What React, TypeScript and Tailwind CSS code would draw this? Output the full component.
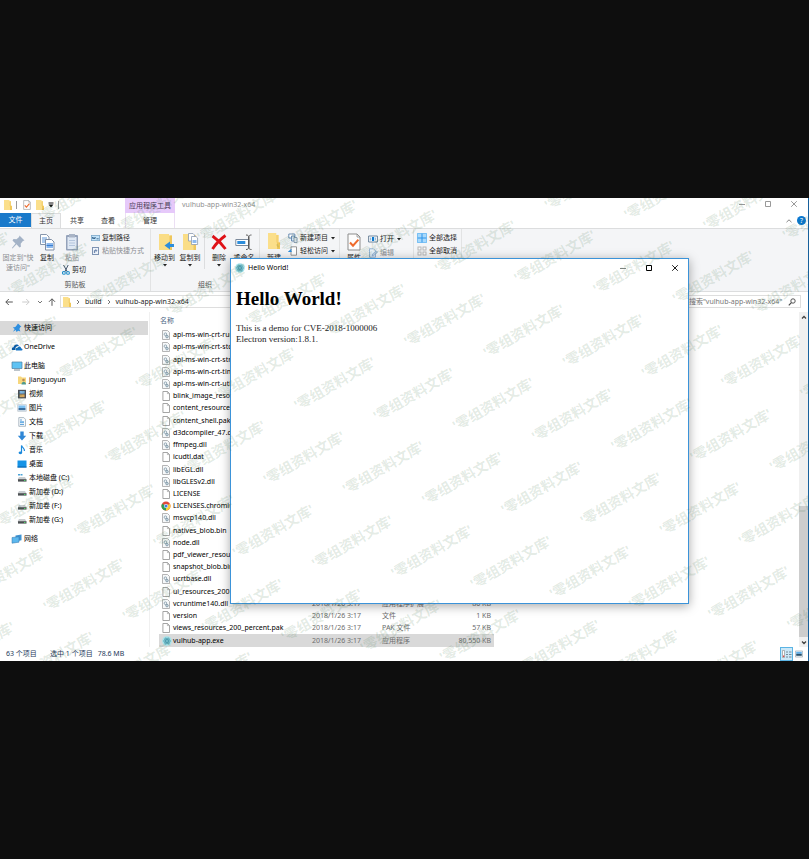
import React from 'react';
import type { ReactNode } from 'react';

/* ---------- icons ---------- */

const Folder = ({ className = 'h-2.5 w-2' }: { className?: string }) => (
  <svg viewBox="0 0 8 10" className={className} preserveAspectRatio="none">
    <path d="M0 0h5.500v1.200h1.500V10H0z" fill="#fbdf8b" />
    <path d="M5.500 1.200H7V6H5.500z" fill="#f5d272" />
    <path d="M6 5.800h2V10H6z" fill="#f0c75a" />
  </svg>
);

const CheckDoc = ({ className }: { className: string }) => (
  <svg viewBox="0 0 14 18" className={className}>
    <path d="M1 1h9l3 3v13H1z" fill="#fdfdfd" stroke="#8d8d8d" strokeWidth="1" />
    <path d="M10 1v3h3" fill="none" stroke="#8d8d8d" strokeWidth=".8" />
    <path d="M3 9.500l3 3.200 5.400-6" fill="none" stroke="#ee6a2c" strokeWidth="2" />
  </svg>
);

const Caret = () => (
  <svg viewBox="0 0 6 4" className="h-1 w-1.5 shrink-0">
    <path d="M1 1h4L3 3.400z" fill="#222" />
  </svg>
);

const PinBig = () => (
  <svg viewBox="0 0 16 18" className="h-[18px] w-4">
    <path d="M9.500 2.500l5 5-1.600.6-2.200 2.600.2 3-1.400.8-3-3.200L2.500 15.500l-.6-.6L5.500 10.500l-3-3 1-1.400 3 .2L9.100 4.100z" fill="#a3b2c6" />
  </svg>
);

const PinSmall = () => (
  <svg viewBox="0 0 10 10" className="h-2.5 w-2.5">
    <path d="M6 .6l3.400 3.200-1.200.5-.8 1.600 1 2.500-2.200-.6L4.500 9 3.800 6.900 1 8.800 2.700 6 .8 4.400l2.500-.3L4.600 2.400z" fill="#2f8fdf" />
  </svg>
);

const Copy = () => (
  <svg viewBox="0 0 16 18" className="h-[18px] w-4">
    <path d="M1.500 1.500h6l2.500 2.500v7.500H1.500z" fill="#fff" stroke="#8897ad" />
    <path d="M3 5h5M3 7h5M3 9h3" stroke="#5a94d8" />
    <path d="M6.500 6.500h6l2.500 2.500v8H6.500z" fill="#fff" stroke="#7f8ea5" />
    <path d="M7.500 10h6.500v5H7.500z" fill="#8db9ee" />
    <path d="M7.500 12.500h6.500" stroke="#3b7fd0" />
  </svg>
);

const Paste = () => (
  <svg viewBox="0 0 14 18" className="h-[18px] w-3.5">
    <rect x="1" y="2" width="12" height="15.500" rx="1" fill="#94a2ba" />
    <rect x="2.500" y="4" width="9" height="12" fill="#dfe8f4" />
    <path d="M4 1h6v3.500H4z" fill="#a9b4c6" />
    <path d="M4 7.500h6M4 10h6M4 12.500h6" stroke="#b4c5dc" />
  </svg>
);

const Scissors = () => (
  <svg viewBox="0 0 8 10" className="h-2.5 w-2">
    <path d="M1.500 0l3.800 6.800M6.200 0L2.800 6.800" stroke="#45586e" strokeWidth="1" fill="none" />
    <circle cx="1.900" cy="7.900" r="1.400" fill="none" stroke="#1d8cc9" strokeWidth="1.100" />
    <circle cx="6" cy="7.900" r="1.400" fill="none" stroke="#1d8cc9" strokeWidth="1.100" />
  </svg>
);

const PathIcon = () => (
  <svg viewBox="0 0 9 8" className="h-2 w-[9px]">
    <rect x=".4" y="1.400" width="8.200" height="5.200" fill="#c4e4fa" stroke="#7ba7c9" strokeWidth=".8" />
    <path d="M1.300 3l.8 2 .8-1.600.8 1.600.7-2M5.500 4.800h2.200" fill="none" stroke="#24547e" strokeWidth=".8" />
  </svg>
);

const ShortcutIcon = () => (
  <svg viewBox="0 0 9 8" className="h-2 w-[9px]">
    <rect x="1.500" y=".5" width="6" height="7" fill="#eef3fa" stroke="#7e93b3" />
    <path d="M3.400 6V3.600h2M4.600 2.300l1.300 1.300-1.300 1.200" fill="none" stroke="#53719e" strokeWidth=".9" />
  </svg>
);

const MoveTo = () => (
  <svg viewBox="0 0 18 18" className="h-[18px] w-[18px]">
    <path d="M3 1h10v1.500h3V17H3z" fill="#fadd86" />
    <path d="M13.500 2.500H16V17h-2.500z" fill="#eec65d" />
    <path d="M18 11v3h-4v2.600L8.500 12.500l5.500-4.100V11z" fill="#2d8ddb" />
  </svg>
);

const CopyTo = () => (
  <svg viewBox="0 0 18 18" className="h-[18px] w-[18px]">
    <path d="M2 1h9v1.500h4V17H2z" fill="#fadd86" />
    <path d="M12.500 2.500H15V17h-2.500z" fill="#eec65d" />
    <path d="M7.500.5h4.500l1.500 1.500v6h-6z" fill="#fff" stroke="#8c9bb0" strokeWidth=".8" />
    <path d="M10.500 3.500h4.500l1.600 1.500v6.500h-6.100z" fill="#fff" stroke="#8c9bb0" strokeWidth=".8" />
    <path d="M11.500 7h4v3h-4z" fill="#8db9ee" />
  </svg>
);

const DeleteX = () => (
  <svg viewBox="0 0 18 18" className="h-[18px] w-[18px]">
    <path d="M2.500 3c5 3.500 9 7.500 13 13M15.500 2.500C10 6.500 6 10.500 2.500 16" fill="none" stroke="#df1218" strokeWidth="2.800" />
  </svg>
);

const Rename = () => (
  <svg viewBox="0 0 18 18" className="h-[18px] w-[18px]">
    <path d="M.8 6.500h13v6H.8z" fill="#fff" stroke="#7c8a9c" />
    <path d="M2.300 8h8v3h-8z" fill="#2d8ddb" />
    <path d="M11 2c1.500 0 2.500.5 2.500 1.500V15c0 1-1 1.500-2.500 1.500M16.500 2c-1.500 0-2.500.5-2.500 1.500V15c0 1 1 1.500 2.500 1.500" fill="none" stroke="#5a5a5a" strokeWidth="1" />
  </svg>
);

const NewItem = () => (
  <svg viewBox="0 0 10 10" className="h-2.5 w-2.5">
    <path d="M.8 1h6v4h-6z" fill="#fff" stroke="#5d83ad" strokeWidth=".9" />
    <path d="M3.500 3h3v5h-3z" fill="#d5e8f8" stroke="#5d83ad" strokeWidth=".9" />
    <path d="M6 4.500h3v5H6z" fill="#e9eef4" stroke="#7f93a9" strokeWidth=".9" />
  </svg>
);

const EasyAccess = () => (
  <svg viewBox="0 0 10 10" className="h-2.5 w-2.5">
    <path d="M3 .8h5.500v8.400H3z" fill="#fff" stroke="#8a8a8a" strokeWidth=".9" />
    <path d="M3.500 3.500L1.200 5.500h2.500" fill="none" stroke="#2d8ddb" strokeWidth="1.200" />
  </svg>
);

const OpenIcon = () => (
  <svg viewBox="0 0 10 8" className="h-2 w-2.5">
    <path d="M.6 1h8.800v6H.6z" fill="#fff" stroke="#5f7891" strokeWidth=".9" />
    <path d="M1.800 2.500h1.500v3H1.800zM7 2.500h1v3H7z" fill="#9dbbd6" />
    <path d="M4 2h2.200v4H4z" fill="#0d7ad0" />
  </svg>
);

const EditIcon = () => (
  <svg viewBox="0 0 10 10" className="h-2.5 w-2.5">
    <path d="M1.500.8h4l2 2v6.400h-6z" fill="#eaf2fa" stroke="#8fb0d2" strokeWidth=".9" />
    <path d="M4 8l.5-2L8.500 3l1 1.200L5.700 7.600z" fill="#b7cfe8" stroke="#7b9cc3" strokeWidth=".6" />
  </svg>
);

const SelectGrid = ({ on }: { on: boolean }) => (
  <svg viewBox="0 0 10 10" className="h-2.5 w-2.5">
    {on && <path d="M0 0h10v10H0z" fill="#a9d9fb" />}
    {on && <path d="M5 0v10M0 5h10" stroke="#2f95ea" strokeWidth="1" />}
    {on && <path d="M.5.5h9v9h-9z" fill="none" stroke="#6dbaf3" strokeWidth=".8" />}
    {!on &&
      [1, 6].map((x) =>
        [1, 6].map((y) => (
          <rect key={`${x}-${y}`} x={x} y={y} width="3" height="3" fill="#fafafa" stroke="#b0b0b0" strokeWidth=".9" />
        )),
      )}
  </svg>
);

const WindowMark = ({ kind, color }: { kind: 'min' | 'max' | 'close'; color: string }) => (
  <svg viewBox="0 0 8 8" className="h-2 w-2" fill="none" stroke={color}>
    {kind === 'min' && <path d="M1 4.500h6" />}
    {kind === 'max' && <path d="M1.500 1.500h5v5h-5z" />}
    {kind === 'close' && <path d="M1.200 1.200l5.600 5.600M6.800 1.200L1.200 6.800" />}
  </svg>
);

const Electron = () => (
  <svg viewBox="0 0 10 10" className="h-2.5 w-2.5 shrink-0">
    <circle cx="5" cy="5" r="4.800" fill="#a5e2ea" />
    <g fill="none" stroke="#3b8da0" strokeWidth=".6">
      <ellipse cx="5" cy="5" rx="3.500" ry="1.400" />
      <ellipse cx="5" cy="5" rx="3.500" ry="1.400" transform="rotate(60 5 5)" />
      <ellipse cx="5" cy="5" rx="3.500" ry="1.400" transform="rotate(120 5 5)" />
    </g>
    <circle cx="5" cy="5" r=".7" fill="#3b8da0" />
  </svg>
);

const fileIcons: Record<string, ReactNode> = {
  dll: (
    <svg viewBox="0 0 8 10" className="h-2.5 w-2">
      <path d="M.5.5h5l2 2v7h-7z" fill="#f6f8f9" stroke="#a3a3a3" strokeWidth=".8" />
      <circle cx="3.400" cy="4.200" r="1.300" fill="none" stroke="#7d96a4" strokeWidth=".8" />
      <circle cx="5" cy="6.600" r="1.300" fill="#c2d2da" stroke="#7d96a4" strokeWidth=".8" />
    </svg>
  ),
  doc: (
    <svg viewBox="0 0 8 10" className="h-2.5 w-2">
      <path d="M.9.5h4.600l2 2v7H.9z" fill="#fff" stroke="#8f8f8f" strokeWidth=".8" />
      <path d="M5.400.5v2.100h2.100" fill="none" stroke="#8f8f8f" strokeWidth=".6" />
    </svg>
  ),
  chrome: (
    <svg viewBox="0 0 10 10" className="h-2.5 w-2.5 -ml-px">
      <circle cx="5" cy="5" r="4.500" fill="#e04a3a" />
      <path d="M5 5L1.100 2.750A4.500 4.500 0 0 0 5 9.500z" fill="#2f9e52" />
      <path d="M5 5v4.500A4.500 4.500 0 0 0 8.900 2.750z" fill="#f7cb3c" />
      <circle cx="5" cy="5" r="2.100" fill="#fff" />
      <circle cx="5" cy="5" r="1.600" fill="#3f80e0" />
    </svg>
  ),
  exe: <Electron />,
};

const Drive = ({ system = false }: { system?: boolean }) => (
  <svg viewBox="0 0 10 10" className="h-2.5 w-2.5">
    {system && <path d="M1 1h2v1.500H1zM3.500 1h2v1.500h-2z" fill="#4aa3d8" />}
    <path d="M2 4h6l1.500 2.500H.5z" fill="#c9cdd0" />
    <path d="M1 6.200h8.500v2.400H1z" fill="#4b4f52" />
    <path d="M7 7h1.500v1H7z" fill="#51d06a" />
  </svg>
);

const navIcons: Record<string, ReactNode> = {
  user: (
    <svg viewBox="0 0 10 10" className="h-2.5 w-2.5">
      <path d="M1 1.500h3l1 1h4v6.500H1z" fill="#f7d77d" />
      <circle cx="6.500" cy="5" r="1.300" fill="#b98a55" />
      <path d="M4.500 9.500c0-3.600 4.500-3.600 4.500 0z" fill="#4f9a8e" />
    </svg>
  ),
  video: (
    <svg viewBox="0 0 10 10" className="h-2.5 w-2.5">
      <path d="M1 .8h8v8.600H1z" fill="#4c4f57" />
      <path d="M2.600 2h5v2.600h-5z" fill="#7fb7e6" />
      <path d="M2.600 5.400h5v2.800h-5z" fill="#d6a65c" />
    </svg>
  ),
  picture: (
    <svg viewBox="0 0 10 10" className="h-2.5 w-2.5">
      <path d="M.7 1.700h8.600v6.600H.7z" fill="#f5f9fc" stroke="#a9b5bf" strokeWidth=".6" />
      <path d="M1.500 2.500h7v2.500h-7z" fill="#7cc0f2" />
      <path d="M1.500 5h7v2.200h-7z" fill="#3a6f9e" />
    </svg>
  ),
  document: (
    <svg viewBox="0 0 10 10" className="h-2.5 w-2.5">
      <path d="M1.800.6h5l1.700 1.700v7H1.800z" fill="#f8fbfd" stroke="#8fa0ae" strokeWidth=".7" />
      <path d="M3 3h2M3 7.500h4" stroke="#3e8ecf" strokeWidth=".8" />
      <path d="M3 4.200h4v2H3z" fill="#6fb1e4" />
    </svg>
  ),
  download: (
    <svg viewBox="0 0 10 10" className="h-2.5 w-2.5">
      <path d="M3.300.5h3.400v4.300h2.500L5 9.500.8 4.800h2.500z" fill="#2f87d6" />
    </svg>
  ),
  music: (
    <svg viewBox="0 0 10 10" className="h-2.5 w-2.5">
      <path d="M4.500.5v7" stroke="#1989dc" strokeWidth="1.200" />
      <ellipse cx="3.400" cy="7.800" rx="1.800" ry="1.400" fill="#1989dc" />
      <path d="M4.600.6c.4 2.200 3.400 2.400 2.800 5.400" fill="none" stroke="#1989dc" strokeWidth="1.200" />
    </svg>
  ),
  desktop: (
    <svg viewBox="0 0 10 10" className="h-2.5 w-2.5">
      <path d="M.5 1.500h9v7h-9z" fill="#1593e6" />
      <path d="M.5 7.500h9v1h-9z" fill="#0a5fa6" />
    </svg>
  ),
  system: <Drive system />,
  drive: <Drive />,
  onedrive: (
    <svg viewBox="0 0 12 10" className="h-2.5 w-3">
      <path d="M1 8C.2 6.200 1.500 5 2.600 5.200 3 2.300 6.600 1.400 8 3.800 5 4 4.200 5.600 4.300 8z" fill="#0a5cae" />
      <path d="M5 8.600C3.800 6.600 5.600 5.400 6.600 5.800c.8-2 3.400-1.500 3.500.4 1.900.1 1.900 2.400.3 2.400z" fill="#1473c4" />
    </svg>
  ),
  pc: (
    <svg viewBox="0 0 12 10" className="h-2.5 w-3">
      <path d="M1 1h10v6.500H1z" fill="#5fc3f4" stroke="#4a7ea0" strokeWidth=".7" />
      <path d="M3 9h6" stroke="#7b8a95" strokeWidth="1" />
    </svg>
  ),
  network: (
    <svg viewBox="0 0 12 10" className="h-2.5 w-3">
      <path d="M4.500 1.500l6-1v5.800L4.500 7.500z" fill="#3f93d2" />
      <path d="M1 3.500l7-.8v5.500L1 9.200z" fill="#5cb8ee" stroke="#3273a8" strokeWidth=".5" />
    </svg>
  ),
  quick: (
    <span className="flex w-3 justify-center">
      <PinSmall />
    </span>
  ),
};

/* ---------- data ---------- */

const navGroups = [
  [{ icon: 'quick', label: '快速访问', root: true }],
  [{ icon: 'onedrive', label: 'OneDrive', root: true }],
  [
    { icon: 'pc', label: '此电脑', root: true },
    { icon: 'user', label: 'jianguoyun' },
    { icon: 'video', label: '视频' },
    { icon: 'picture', label: '图片' },
    { icon: 'document', label: '文档' },
    { icon: 'download', label: '下载' },
    { icon: 'music', label: '音乐' },
    { icon: 'desktop', label: '桌面' },
    { icon: 'system', label: '本地磁盘 (C:)' },
    { icon: 'drive', label: '新加卷 (D:)' },
    { icon: 'drive', label: '新加卷 (F:)' },
    { icon: 'drive', label: '新加卷 (G:)' },
  ],
  [{ icon: 'network', label: '网络', root: true }],
] as { icon: string; label: string; root?: boolean }[][];

const files: string[][] = [
  ['dll', 'api-ms-win-crt-runtime'],
  ['dll', 'api-ms-win-crt-stdio'],
  ['dll', 'api-ms-win-crt-string'],
  ['dll', 'api-ms-win-crt-time'],
  ['dll', 'api-ms-win-crt-utility'],
  ['doc', 'blink_image_resources'],
  ['doc', 'content_resources'],
  ['doc', 'content_shell.pak'],
  ['dll', 'd3dcompiler_47.dll'],
  ['dll', 'ffmpeg.dll'],
  ['doc', 'icudtl.dat'],
  ['dll', 'libEGL.dll'],
  ['dll', 'libGLESv2.dll'],
  ['doc', 'LICENSE'],
  ['chrome', 'LICENSES.chromium'],
  ['dll', 'msvcp140.dll'],
  ['doc', 'natives_blob.bin'],
  ['dll', 'node.dll'],
  ['doc', 'pdf_viewer_resources'],
  ['doc', 'snapshot_blob.bin'],
  ['dll', 'ucrtbase.dll'],
  ['doc', 'ui_resources_200'],
  ['dll', 'vcruntime140.dll', '2018/1/26 3:17', '应用程序扩展', '86 KB'],
  ['doc', 'version', '2018/1/26 3:17', '文件', '1 KB'],
  ['doc', 'views_resources_200_percent.pak', '2018/1/26 3:17', 'PAK 文件', '57 KB'],
  ['exe', 'vulhub-app.exe', '2018/1/26 3:17', '应用程序', '80,550 KB'],
];

/* ---------- ribbon parts ---------- */

const BigButton = ({ icon, label, width, caret, muted }: { icon: ReactNode; label: ReactNode; width: string; caret?: boolean; muted?: boolean }) => (
  <button className={`flex shrink-0 flex-col items-center ${width} ${muted ? 'text-[#8b8e92]' : 'text-[#222]'}`}>
    <span className="flex h-5 items-start justify-center">{icon}</span>
    <span className="whitespace-nowrap leading-[10px]">{label}</span>
    {caret && <Caret />}
  </button>
);

const SmallButton = ({ icon, label, caret, muted }: { icon: ReactNode; label: string; caret?: boolean; muted?: boolean }) => (
  <button className={`flex h-3 items-center gap-0.5 whitespace-nowrap leading-[10px] ${muted ? 'text-[#8b8e92]' : 'text-[#222]'}`}>
    {icon}
    {label}
    {caret && <Caret />}
  </button>
);

const SmallStack = ({ className = '', children }: { className?: string; children: ReactNode }) => (
  <div className={`-mt-px flex flex-col gap-px ${className}`}>{children}</div>
);

const Group = ({ label, width, children }: { label?: string; width: string; children: ReactNode }) => (
  <div className={`flex shrink-0 flex-col justify-between border-r border-[#e2e3e4] pt-1 ${width}`}>
    <div className="flex items-start">{children}</div>
    <div className="h-3 text-center leading-3 text-[#555]">{label}</div>
  </div>
);

const Ribbon = () => (
  <div className="flex h-16 border-y border-[#dcddde] bg-[#f4f5f7]">
    <Group label="剪贴板" width="w-[151px]">
      <BigButton width="w-9" muted icon={<PinBig />} label={<>固定到"快<br />速访问"</>} />
      <BigButton width="w-[22px]" icon={<Copy />} label="复制" />
      <div className="flex w-[33px] flex-col items-start gap-px pl-1">
        <BigButton width="w-5" muted icon={<Paste />} label="粘贴" />
        <SmallButton icon={<Scissors />} label="剪切" />
      </div>
      <SmallStack>
        <SmallButton icon={<PathIcon />} label="复制路径" />
        <SmallButton muted icon={<ShortcutIcon />} label="粘贴快捷方式" />
      </SmallStack>
    </Group>
    <Group label="组织" width="w-[109px]">
      <BigButton width="w-[27px]" caret icon={<MoveTo />} label="移动到" />
      <BigButton width="w-6" caret icon={<CopyTo />} label="复制到" />
      <div className="mx-0.5 h-9 w-px bg-[#dcdddf]" />
      <BigButton width="w-6" caret icon={<DeleteX />} label="删除" />
      <BigButton width="w-[26px]" icon={<Rename />} label="重命名" />
    </Group>
    <Group width="w-20">
      <BigButton width="w-7" icon={<Folder className="h-4 w-3" />} label="新建" />
      <SmallStack>
        <SmallButton caret icon={<NewItem />} label="新建项目" />
        <SmallButton caret icon={<EasyAccess />} label="轻松访问" />
      </SmallStack>
    </Group>
    <Group width="w-[74px]">
      <BigButton width="w-7" icon={<CheckDoc className="h-[18px] w-3.5" />} label="属性" />
      <div className="flex flex-col gap-0.5">
        <SmallButton caret icon={<OpenIcon />} label="打开" />
        <SmallButton muted icon={<EditIcon />} label="编辑" />
      </div>
    </Group>
    <Group width="w-12">
      <SmallStack className="pl-[3px]">
        <SmallButton icon={<SelectGrid on />} label="全部选择" />
        <SmallButton icon={<SelectGrid on={false} />} label="全部取消" />
      </SmallStack>
    </Group>
  </div>
);

/* ---------- explorer ---------- */

const TitleBar = () => (
  <header className="flex h-[15px] items-center bg-white">
    <div className="flex w-[125px] items-center pb-0.5 pl-1">
      <Folder />
      <span className="ml-1 mr-1.5 h-2 w-px bg-[#999]" />
      <CheckDoc className="h-2.5 w-2" />
      <span className="ml-[5px] mr-1">
        <Folder />
      </span>
      <svg viewBox="0 0 6 6" className="h-1.5 w-1.5">
        <path d="M.5 1h5" stroke="#111" />
        <path d="M.5 2.600h5L3 5.400z" fill="#111" />
      </svg>
      <span className="ml-1 h-2 w-px bg-[#999]" />
    </div>
    <div className="h-full w-[50px] bg-[#e6c9fa] text-center leading-[15px] text-[#4c3b58]">应用程序工具</div>
    <h1 className="flex-1 pb-0.5 pl-[7px] text-[#909090]">vulhub-app-win32-x64</h1>
    <div className="flex items-center gap-[18px] pb-[3px] pr-2.5">
      <button aria-label="最小化"><WindowMark kind="min" color="#999" /></button>
      <button aria-label="最大化"><WindowMark kind="max" color="#999" /></button>
      <button aria-label="关闭"><WindowMark kind="close" color="#999" /></button>
    </div>
  </header>
);

const Tabs = () => (
  <nav className="flex h-[15px] items-center bg-white text-[#333]">
    <button className="h-[14px] w-[31px] self-start bg-[#1979ca] leading-[14px] text-white">文件</button>
    <button className="h-full w-[30px] border-x border-t border-[#dcddde] bg-[#f4f5f7]">主页</button>
    <button className="w-8">共享</button>
    <button className="w-[30px]">查看</button>
    <button className="ml-0.5 h-full w-[50px] border-x border-[#ecdff4]">管理</button>
    <span className="flex-1" />
    <svg viewBox="0 0 8 6" className="mr-1 h-1.5 w-2">
      <path d="M1.500 4.200L4 1.800l2.500 2.400" fill="none" stroke="#777" strokeWidth=".9" />
    </svg>
    <button aria-label="帮助" className="mr-0.5 h-[9px] w-[9px] rounded-full bg-[#0b78d0] text-center leading-[9px] text-white">?</button>
  </nav>
);

const Chevron = ({ down = false }: { down?: boolean }) => (
  <svg viewBox="0 0 6 6" className="h-1.5 w-1.5 shrink-0">
    <path d={down ? 'M1 2l2 2 2-2' : 'M2 1l2 2-2 2'} fill="none" stroke="#666" strokeWidth=".9" />
  </svg>
);

const Arrow = ({ className }: { className: string }) => (
  <svg viewBox="0 0 8 8" className={`h-2 w-2 ${className}`} fill="none" stroke="currentColor" strokeWidth="1">
    <path d="M7.800 4H.9M3.800 1L.8 4l3 3" />
  </svg>
);

const AddressBar = () => (
  <div className="flex h-5 items-center bg-white pb-px">
    <div className="flex w-[60px] shrink-0 items-center pl-[5px]">
      <button aria-label="后退"><Arrow className="text-[#555]" /></button>
      <button aria-label="前进" className="ml-[9px]"><Arrow className="rotate-180 text-[#ccc]" /></button>
      <span className="ml-[7px]"><Chevron down /></span>
      <button aria-label="上移" className="ml-[5px]"><Arrow className="rotate-90 text-[#555]" /></button>
    </div>
    <div className="flex h-[13px] flex-1 items-center border border-[#dedede] pl-0.5 text-[#222]">
      <Folder />
      <span className="mx-1"><Chevron /></span>
      <a href="#build">build</a>
      <span className="mx-1"><Chevron /></span>
      <a href="#app">vulhub-app-win32-x64</a>
    </div>
    <label className="ml-1 mr-[7px] flex h-[13px] w-[116px] items-center border border-[#dedede] pl-[3px]">
      <input
        aria-label="搜索"
        placeholder={'搜索"vulhub-app-win32-x64"'}
        className="h-full min-w-0 flex-1 bg-transparent outline-none placeholder:text-[#777]"
      />
      <svg viewBox="0 0 8 8" className="mr-1 h-2 w-2">
        <circle cx="5" cy="3" r="2.200" fill="none" stroke="#444" strokeWidth=".9" />
        <path d="M3.400 4.600L.8 7.400" stroke="#444" strokeWidth="1.100" />
      </svg>
    </label>
  </div>
);

const NavPane = () => (
  <aside className="flex w-[150px] shrink-0 flex-col gap-[5px] border-r border-[#f0f0f0] pt-[9px]">
    {navGroups.map((group, g) => (
      <ul key={g}>
        {group.map((item) => (
          <li
            key={item.label}
            className={`mr-px flex h-3.5 items-center ${item.root ? 'gap-px pl-[11px]' : 'gap-0.5 pl-[17px]'} ${g === 0 ? 'bg-[#d9d9d9]' : ''}`}
          >
            {navIcons[item.icon]}
            <a href={`#${item.icon}`}>{item.label}</a>
          </li>
        ))}
      </ul>
    ))}
  </aside>
);

const FileList = () => (
  <div className="flex-1 pl-[9px]">
    <table className="h-[335px] w-[335px] table-fixed border-collapse text-left">
      <thead>
        <tr className="h-[17px] text-[#4b6584]">
          <th className="w-[153px] p-0 pl-px font-normal">名称</th>
          <th className="w-[70px] p-0" />
          <th className="w-[66px] p-0" />
          <th className="p-0" />
        </tr>
      </thead>
      <tbody>
        {files.map(([icon, name, date, type, size]) => (
          <tr key={name} className={`leading-3 ${icon === 'exe' ? 'bg-[#d9d9d9]' : ''}`}>
            <td className="p-0 pl-[3px]">
              <span className="flex items-center whitespace-nowrap">
                <span className="flex w-[11px]">{fileIcons[icon]}</span>
                {name}
              </span>
            </td>
            <td className="whitespace-nowrap p-0 text-[#6d6d6d]">{date}</td>
            <td className="whitespace-nowrap p-0 text-[#6d6d6d]">{type}</td>
            <td className="whitespace-nowrap p-0 pr-[3px] text-right text-[#6d6d6d]">{size}</td>
          </tr>
        ))}
      </tbody>
    </table>
  </div>
);

const ScrollBar = () => (
  <div className="flex w-[9px] flex-col items-center bg-[#f0f0f0]">
    <svg viewBox="0 0 8 10" className="h-2.5 w-2"><path d="M2 6.500l2-2 2 2" fill="none" stroke="#444" strokeWidth="1.300" /></svg>
    <div className="flex-1" />
    <div className="h-[131px] w-full bg-[#cdcdcd]" />
    <svg viewBox="0 0 8 10" className="h-2.5 w-2"><path d="M2 4.500l2 2 2-2" fill="none" stroke="#444" strokeWidth="1.300" /></svg>
  </div>
);

const StatusBar = () => (
  <footer className="flex h-3.5 items-center bg-white pl-1.5 text-[#1e395b]">
    <span className="w-11">63 个项目</span>
    <span>选中 1 个项目</span>
    <span className="ml-[5px] flex-1">78.6 MB</span>
    <button aria-label="详细信息" className="flex h-full w-[13px] items-center justify-center border border-[#5bb4e4] bg-[#cbe8f8]">
      <svg viewBox="0 0 10 8" className="h-2 w-2.5">
        <path d="M.5.500h2v7h-2z" fill="#fff" stroke="#888" strokeWidth=".6" />
        <path d="M4 2h2M4 4.500h2M4 7h2M7 2h2.500M7 4.500h2.500M7 7h2.500" stroke="#5f7482" strokeWidth=".8" />
        <path d="M1 5.500h1.200v1.500H1z" fill="#d44" />
      </svg>
    </button>
    <button aria-label="缩略图" className="ml-0.5 mr-[5px]">
      <svg viewBox="0 0 8 8" className="h-2 w-2">
        <path d="M.4 1h7.200v6H.4z" fill="#fff" stroke="#9aa7b1" strokeWidth=".7" />
        <path d="M1.200 1.800h5.600v2H1.200z" fill="#5fb1ee" />
        <path d="M1.200 3.800h5.600v2H1.200z" fill="#26506c" />
      </svg>
    </button>
  </footer>
);

/* ---------- demo window ---------- */

const DemoWindow = () => (
  <div className="absolute left-[230px] top-[60px] h-[346px] w-[459px] border border-[#3b93d9] bg-white shadow-[0_2px_10px_rgba(0,0,0,0.35)]">
    <div className="flex h-[17px] items-center pl-1 pr-[9px]">
      <Electron />
      <span className="flex-1 pl-[3px]">Hello World!</span>
      <div className="flex items-center gap-[18px]">
        <button aria-label="最小化窗口"><WindowMark kind="min" color="#888" /></button>
        <button aria-label="最大化窗口"><WindowMark kind="max" color="#000" /></button>
        <button aria-label="关闭窗口"><WindowMark kind="close" color="#222" /></button>
      </div>
    </div>
    <div className="px-[5px] pt-[13px] font-['Liberation_Serif','Noto_Sans_CJK_SC',serif]">
      <h2 className="text-[19px] font-bold leading-5">Hello World!</h2>
      <p className="mt-3.5 text-[9px] leading-[11px] text-[#222]">
        This is a demo for CVE-2018-1000006
        <br />
        Electron version:1.8.1.
      </p>
    </div>
  </div>
);

/* ---------- watermark ---------- */

const MarkRow = ({ className }: { className: string }) => (
  <div className={`flex items-center ${className}`}>
    {Array.from({ length: 9 }, (_, i) => (
      <span key={i} className="w-[127px] shrink-0 text-center">'零组资料文库'</span>
    ))}
  </div>
);

const Watermark = () => (
  <div aria-hidden="true" className="pointer-events-none absolute inset-0 overflow-hidden">
    <div className="absolute left-[-256px] top-[51px] w-[1200px] origin-top-left -rotate-30 select-none whitespace-nowrap text-[14px] font-bold text-[#2f6b3a]/14">
      {Array.from({ length: 10 }, (_, i) => (
        <div key={i}>
          <MarkRow className="h-12" />
          <MarkRow className="-ml-16 h-[49px]" />
        </div>
      ))}
    </div>
  </div>
);

export default function App() {
  return (
    <main className="flex min-h-screen flex-col justify-center overflow-hidden bg-[#0e0e0e] font-['Noto_Sans','Noto_Sans_CJK_SC',sans-serif] text-[7px] leading-[10px] text-black">
      <section className="relative overflow-hidden border-r border-[#17609c] bg-white">
        <TitleBar />
        <Tabs />
        <Ribbon />
        <AddressBar />
        <div className="flex">
          <NavPane />
          <FileList />
          <ScrollBar />
        </div>
        <StatusBar />
        <DemoWindow />
        <Watermark />
      </section>
    </main>
  );
}
